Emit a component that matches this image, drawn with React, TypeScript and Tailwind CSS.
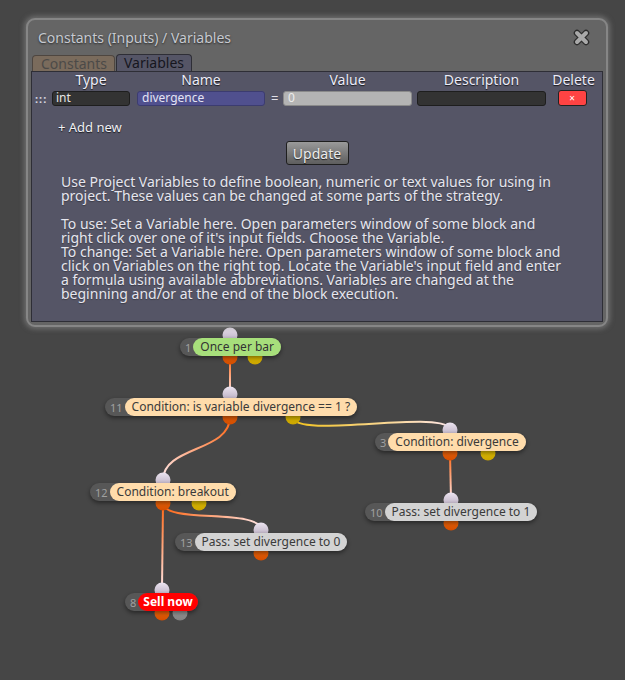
import React from "react";

type Out = { x: number; c: "o" | "y" | "g" };
type NodeDef = {
  num: string;
  label: string;
  x: number;
  y: number;
  kind: "green" | "cond" | "pass" | "sell";
  inX: number;
  inY: number;
  outY: number;
  outs: Out[];
};

const nodes: NodeDef[] = [
  { num: "1", label: "Once per bar", x: 180, y: 338, kind: "green", inX: 230, inY: 335, outY: 357, outs: [{ x: 230, c: "o" }, { x: 255, c: "y" }] },
  { num: "11", label: "Condition: is variable divergence == 1 ?", x: 105, y: 398, kind: "cond", inX: 230, inY: 394, outY: 417, outs: [{ x: 230, c: "o" }, { x: 293, c: "y" }] },
  { num: "3", label: "Condition: divergence", x: 375, y: 433, kind: "cond", inX: 450, inY: 430, outY: 453, outs: [{ x: 450, c: "o" }, { x: 488, c: "y" }] },
  { num: "10", label: "Pass: set divergence to 1", x: 365, y: 503, kind: "pass", inX: 451, inY: 500, outY: 523, outs: [{ x: 451, c: "o" }] },
  { num: "12", label: "Condition: breakout", x: 90, y: 483, kind: "cond", inX: 163, inY: 480, outY: 503, outs: [{ x: 163, c: "o" }, { x: 199, c: "y" }] },
  { num: "13", label: "Pass: set divergence to 0", x: 175, y: 533, kind: "pass", inX: 261, inY: 530, outY: 553, outs: [{ x: 261, c: "o" }] },
  { num: "8", label: "Sell now", x: 125, y: 593, kind: "sell", inX: 162, inY: 590, outY: 613, outs: [{ x: 162, c: "o" }, { x: 180, c: "g" }] },
];

const edges = [
  { id: "e1", d: "M230,357 L230,394", x1: 230, y1: 357, x2: 230, y2: 394, from: "#ff6410" },
  { id: "e2", d: "M230,417 C230,452 163,446 163,480", x1: 230, y1: 417, x2: 163, y2: 480, from: "#ff6410" },
  { id: "e3", d: "M293,417 C293,440 450,408 450,430", x1: 293, y1: 417, x2: 450, y2: 430, from: "#f2c21c" },
  { id: "e4", d: "M450,453 L451,500", x1: 450, y1: 453, x2: 451, y2: 500, from: "#ff6410" },
  { id: "e5", d: "M163,503 C163,524 261,508 261,530", x1: 163, y1: 503, x2: 261, y2: 530, from: "#ff6410" },
  { id: "e6", d: "M163,503 L162,590", x1: 163, y1: 503, x2: 162, y2: 590, from: "#ff6410" },
];

function Dot({ x, y, c }: { x: number; y: number; c: "i" | "o" | "y" | "g" }) {
  const cls =
    c === "i"
      ? "bg-gradient-to-b from-[#ece4f0] to-[#b4a8bc]"
      : c === "o"
      ? "bg-gradient-to-b from-[#ff7412] to-[#d24c00]"
      : c === "y"
      ? "bg-gradient-to-b from-[#f4d400] to-[#c9a300]"
      : "bg-gradient-to-b from-[#a8a8a8] to-[#808080]";
  return (
    <div
      className={`absolute h-[15px] w-[15px] -translate-x-1/2 -translate-y-1/2 rounded-full ${cls}`}
      style={{ left: x, top: y }}
    />
  );
}

function GraphNode({ n }: { n: NodeDef }) {
  const labelCls =
    n.kind === "green"
      ? "bg-[#a7df7b] text-[#333] px-[7px]"
      : n.kind === "cond"
      ? "bg-[#ffdcab] text-[#3a3a3a] px-[7px]"
      : n.kind === "pass"
      ? "bg-[#d3d3d3] text-[#3a3a3a] px-[7px]"
      : "bg-[#ff0000] text-white font-bold px-[5px]";
  return (
    <div
      className="absolute flex h-[18px] items-center rounded-full bg-[#575757] shadow-[0_2px_4px_rgba(0,0,0,0.45)]"
      style={{ left: n.x, top: n.y }}
    >
      <span className="pl-[5px] pr-[2px] text-[11px] leading-none text-[#a0a0a0]">{n.num}</span>
      <span className={`flex h-[18px] items-center whitespace-nowrap rounded-full text-[12px] leading-none ${labelCls}`}>
        {n.label}
      </span>
    </div>
  );
}

function Graph() {
  return (
    <div className="absolute inset-0">
      <svg className="absolute inset-0" width="625" height="680">
        <defs>
          {edges.map((e) => (
            <linearGradient key={e.id} id={e.id} gradientUnits="userSpaceOnUse" x1={e.x1} y1={e.y1} x2={e.x2} y2={e.y2}>
              <stop offset="0" stopColor={e.from} />
              <stop offset="1" stopColor="#ffe6e6" />
            </linearGradient>
          ))}
        </defs>
        {edges.map((e) => (
          <path key={e.id} d={e.d} fill="none" stroke={`url(#${e.id})`} strokeWidth="2" />
        ))}
      </svg>
      {nodes.map((n) => (
        <React.Fragment key={n.num + "d"}>
          <Dot x={n.inX} y={n.inY} c="i" />
          {n.outs.map((o) => (
            <Dot key={o.x} x={o.x} y={n.outY} c={o.c} />
          ))}
        </React.Fragment>
      ))}
      {nodes.map((n) => (
        <GraphNode key={n.num} n={n} />
      ))}
    </div>
  );
}

function CloseIcon() {
  return (
    <svg width="17" height="17" viewBox="0 0 17 17">
      <path d="M4 4 L13 13 M13 4 L4 13" stroke="#2c2c2c" strokeWidth="6.5" strokeLinecap="round" />
      <path d="M4 4 L13 13 M13 4 L4 13" stroke="#a9a9a9" strokeWidth="4" strokeLinecap="round" />
    </svg>
  );
}

const headShadow = "[text-shadow:0_1px_1px_rgba(0,0,0,0.7)]";

export default function App() {
  return (
    <div className="relative h-[680px] w-[625px] overflow-hidden bg-[#464646] pl-[26px] pt-[18px] font-['Noto_Sans',sans-serif]">
      <Graph />
      <div className="relative z-10 w-[582px] rounded-[9px] border-2 border-[#868686] bg-[#656565] px-[3px] pb-[3px] shadow-[0_0_5px_2px_rgba(150,150,150,0.5)]">
        {/* title bar */}
        <div className="flex h-[34px] items-center justify-between pl-[7px] pr-[13px]">
          <span className="text-[14px] text-[#c6c9d0] [text-shadow:0_1px_2px_rgba(0,0,0,0.6)]">
            Constants (Inputs) / Variables
          </span>
          <CloseIcon />
        </div>
        {/* tabs */}
        <div className="flex h-[17px] items-end gap-[1px] pl-[1px]">
          <div className="flex h-[16px] w-[83px] items-center rounded-t-[4px] border border-b-0 border-[#4e4640] bg-[#7a6b5c] pl-[8px] text-[14px] leading-none text-[#4c4a48]">
            Constants
          </div>
          <div className="flex h-[17px] w-[76px] items-center rounded-t-[4px] border border-b-0 border-[#2e2e36] bg-[#555566] pl-[7px] text-[14px] leading-none text-[#16161e]">
            Variables
          </div>
        </div>
        {/* panel */}
        <div className="h-[251px] border border-[#2e2e36] bg-[#555566]">
          <div className={`grid h-[16px] grid-cols-[20px_78px_7px_128px_18px_129px_5px_129px_54px] items-center text-[14px] leading-none text-[#ececf8] ${headShadow}`}>
            <span />
            <span className="text-center">Type</span>
            <span />
            <span className="text-center">Name</span>
            <span />
            <span className="text-center">Value</span>
            <span />
            <span className="text-center">Description</span>
            <span className="pl-[1px] text-center">Delete</span>
          </div>
          <div className="mt-[2px] grid h-[16px] grid-cols-[20px_78px_7px_128px_18px_129px_5px_129px_54px] items-center text-[12px] leading-none">
            <span className="pl-[3px] text-[11px] font-bold tracking-[1px] text-[#d8d8e0]">:::</span>
            <div className="flex h-[15px] items-center rounded-[3px] border border-[#1e1e1e] bg-[#333333] pl-[3px] text-[#e6e6e6]">int</div>
            <span />
            <div className="flex h-[15px] items-center rounded-[3px] border border-[#3c3c70] bg-[#50508e] pl-[4px] text-[#e4e4f4]">divergence</div>
            <span className="pl-[6px] text-[13px] text-[#e0e0e8]">=</span>
            <div className="flex h-[15px] items-center rounded-[3px] border border-[#8a8a8a] bg-[#b4b4b4] pl-[4px] text-[#ececec]">0</div>
            <span />
            <div className="flex h-[15px] items-center rounded-[3px] border border-[#1e1e1e] bg-[#333333]" />
            <div className="flex justify-center pr-[2px]">
              <div className="flex h-[16px] w-[29px] items-center justify-center rounded-[3px] border border-[#222] bg-[#ff4343] text-[10px] text-white">
                ×
              </div>
            </div>
          </div>
          <div className={`mt-[13px] pl-[26px] text-[13px] leading-[16px] text-[#f0f0f4] ${headShadow}`}>+ Add new</div>
          <div className="mt-[6px] flex justify-center">
            <div className={`flex h-[24px] w-[63px] items-center justify-center rounded-[3px] border border-[#1f1f1f] bg-gradient-to-b from-[#9a9a9a] to-[#5e5e5e] text-[14px] text-[#ececec] ${headShadow}`}>
              Update
            </div>
          </div>
          <p className="mt-[10px] whitespace-nowrap pl-[29px] text-[14px] leading-[14px] text-[#e6e6ee] [text-shadow:0_1px_1px_rgba(0,0,0,0.3)]">
            Use Project Variables to define boolean, numeric or text values for using in
            <br />
            project. These values can be changed at some parts of the strategy.
            <br />
            <br />
            To use: Set a Variable here. Open parameters window of some block and
            <br />
            right click over one of it's input fields. Choose the Variable.
            <br />
            To change: Set a Variable here. Open parameters window of some block and
            <br />
            click on Variables on the right top. Locate the Variable's input field and enter
            <br />
            a formula using available abbreviations. Variables are changed at the
            <br />
            beginning and/or at the end of the block execution.
          </p>
        </div>
      </div>
    </div>
  );
}
